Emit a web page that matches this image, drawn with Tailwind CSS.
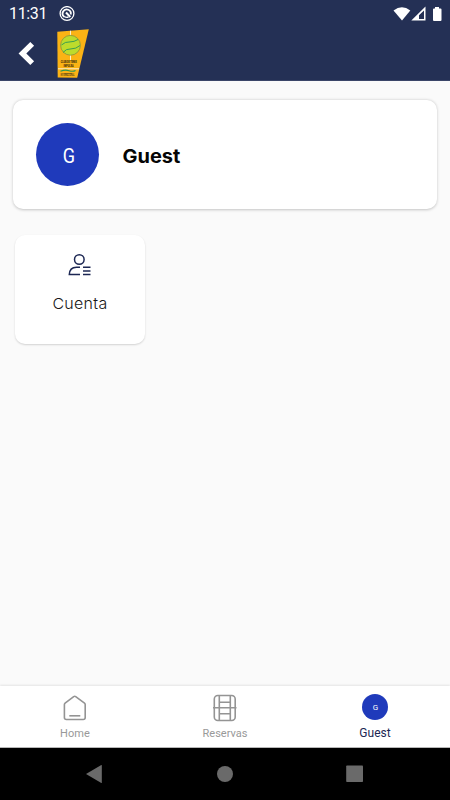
<!DOCTYPE html>
<html lang="es">
<head>
<meta charset="utf-8">
<title>Guest</title>
<script src="https://cdn.jsdelivr.net/npm/@tailwindcss/browser@4"></script>
</head>
<body class="font-[Roboto,sans-serif]">
<div class="flex flex-col w-[450px] h-[800px] overflow-hidden bg-[#fafafa]">
  <header class="h-[81px] shrink-0 bg-[#243055] border-b border-[#3a4568] text-white">
    <div class="h-[28px] flex items-center justify-between pl-[9px] pr-[8px]">
      <div class="flex items-center">
        <span class="w-[50px] text-[16px] leading-[28px] tracking-[-0.35px]">11:31</span>
        <svg class="w-[16px] h-[16px]" viewBox="0 0 16 16" fill="none" stroke="#fff"><circle cx="8" cy="7.500" r="6.900" stroke-width="1.300"/><path d="M5.200 10.800A4.100 4.100 0 1 1 11.700 8.500" stroke-width="1.800"/><path d="M7 6.500l4.300 4.500" stroke-width="2"/><path d="M5 10.500q2.500 1.400 4.500.500" stroke-width="1.400"/></svg>
      </div>
      <svg class="w-[50px] h-[16px]" viewBox="392 5 50 16" fill="#fff"><path d="M393.500 9.500Q402 2.900 410.300 9.500L402 19.500Z"/><path fill-rule="evenodd" d="M425.500 5.500V19.500H411.300ZM424 9.500L419 14.300V18H424Z"/><path d="M423.500 10.800L420.500 13.800V17.200H423.500Z" fill="#243055"/><path d="M435 6h4v1.500h1.500q1 0 1 1V19q0 1-1 1h-6.500q-1 0-1-1V8.500q0-1 1-1H435Z"/></svg>
    </div>
    <div class="flex h-[52px] pl-[18px]">
      <svg class="w-[39px] h-[50px]" viewBox="18 28 39 50" fill="none"><path d="M32.200 43.800L22.400 53.500L32.200 63.200" stroke="#fff" stroke-width="5.400"/></svg>
      <svg class="w-[33px] h-[51px]" viewBox="57 28 33 51">
        <path d="M57.300 31.700L88.800 29.200L77.200 77.800L57.700 77.500Z" fill="#fbb315"/>
        <path d="M70.500 30.700V35M70.500 55v5M58 68.800H79" stroke="#fff" stroke-width=".8" fill="none"/>
        <circle cx="70.500" cy="45.300" r="9.900" fill="#bddb2c" stroke="#8b9a3c" stroke-width=".9"/>
        <path d="M61.500 45Q65 41.500 70 41.900Q74 42 78 39.500M63 52.500Q66 48.500 71 48.900Q76 49 80 45.500" stroke="#2c9654" stroke-width=".9" fill="none"/>
        <text x="60.700" y="63.400" font-size="4.200" font-weight="900" textLength="16" lengthAdjust="spacingAndGlyphs" fill="#382b0e">CLUB DE TENIS</text>
        <text x="63.500" y="67.300" font-size="4.200" font-weight="900" textLength="10" lengthAdjust="spacingAndGlyphs" fill="#382b0e">IMPULSA</text>
        <path d="M60.500 71.300Q65 69.400 69 70.700T75.500 70.500" stroke="#2c9654" stroke-width="1.100" fill="none"/>
        <text x="64" y="74" font-size="2.500" font-weight="700" textLength="8" lengthAdjust="spacingAndGlyphs" fill="#5b4514">TORNEO</text>
        <text x="60.500" y="76.400" font-size="2.600" font-weight="700" textLength="14" lengthAdjust="spacingAndGlyphs" fill="#5b4514">INTERNACIONAL</text>
      </svg>
    </div>
  </header>

  <main class="flex-1 pt-[19px] px-[13px]">
    <section class="h-[109px] rounded-[10px] bg-white flex items-center pl-[23px] shadow-[0_0.5px_3px_rgba(0,0,0,0.22)]">
      <div class="size-[63px] rounded-full bg-[#1f3abb] flex items-center justify-center text-white text-[20px] pl-[2px] pt-[2px]"><span class="inline-block scale-x-90">G</span></div>
      <svg class="w-[70px] h-[30px] ml-[21px]" viewBox="120 140 70 30"><text x="122.500" y="162.600" font-family="Inter, sans-serif" font-weight="700" font-size="19" textLength="57.800" lengthAdjust="spacingAndGlyphs" fill="#050505">Guest</text></svg>
    </section>
    <section class="mt-[26px] ml-[2px] w-[130px] h-[109px] rounded-[10px] bg-white flex flex-col items-center shadow-[0_1px_2px_rgba(0,0,0,0.16)]">
      <svg class="mt-[17px] w-[26px] h-[26px]" viewBox="67 252 26 26" fill="none" stroke="#1c2753" stroke-width="1.500"><circle cx="79.300" cy="259.500" r="4.800"/><path d="M80 267.300H76.500Q69.500 267.500 69.300 274.600H80M83 267.300h7.500M83 270.900h7.500M83 274.600h7.500"/></svg>
      <svg class="mt-[13px] w-[64px] h-[24px]" viewBox="48 291 64 24"><text x="52.400" y="309" font-family="Inter, sans-serif" font-weight="300" font-size="15" letter-spacing=".3" textLength="55.200" lengthAdjust="spacingAndGlyphs" fill="#171717">Cuenta</text></svg>
    </section>
  </main>

  <nav class="h-[62px] shrink-0 grid grid-cols-3 bg-white border-b border-[#b7b7b7] shadow-[0_-1px_2px_rgba(0,0,0,0.09)] text-[11px] text-[#999]">
    <div class="flex flex-col items-center">
      <svg class="mt-[8px] w-[26px] h-[28px]" viewBox="62 694 26 28" fill="none" stroke="#949494" stroke-width="1.600" stroke-linejoin="round"><path d="M64.400 704.500Q64.400 703.700 65.100 703.100L73.700 696.600Q74.700 696 75.700 696.600L84.500 703.100Q85.200 703.700 85.200 704.500V717.500Q85.200 719.500 83.200 719.500H66.400Q64.400 719.500 64.400 717.500Z"/><path d="M69.300 715.800H80.300"/></svg>
      <span class="mt-[4px] leading-[16px] tracking-[0.1px]">Home</span>
    </div>
    <div class="flex flex-col items-center">
      <svg class="mt-[8px] w-[26px] h-[28px]" viewBox="212 694 26 28" fill="none" stroke="#949494" stroke-width="1.600"><rect x="214.300" y="695.500" width="20.900" height="25" rx="3.500"/><path d="M219.300 695.500V720.500M230.300 695.500V720.500M219.300 702.300H230.300M213 707.700H236.500M219.300 713.700H230.300"/></svg>
      <span class="mt-[4px] leading-[16px]">Reservas</span>
    </div>
    <div class="flex flex-col items-center">
      <div class="mt-[8px] size-[26px] rounded-full bg-[#1f3abb] flex items-center justify-center text-white text-[8px] pl-[1px] pt-px">G</div>
      <span class="mt-[5px] leading-[16px] text-[12px] text-[#1c2753]">Guest</span>
    </div>
  </nav>
  <footer class="h-[52px] shrink-0 bg-black flex items-start justify-between pt-[17px] px-[86px]">
    <svg class="w-[17px] h-[19px]" viewBox="0 0 17 19" fill="#6a6a6a"><path d="M0 9L15.300 .1Q15.800 0 15.800 .6V17.500Q15.800 18.200 15.300 18Z"/></svg>
    <svg class="w-[17px] h-[19px]" viewBox="0 0 17 19" fill="#6a6a6a"><circle cx="9" cy="9" r="8"/></svg>
    <svg class="w-[18px] h-[19px]" viewBox="0 0 18 19" fill="#6a6a6a"><rect x=".2" y=".5" width="16.800" height="16.500" rx=".8"/></svg>
  </footer>
</div>
</body>
</html>
